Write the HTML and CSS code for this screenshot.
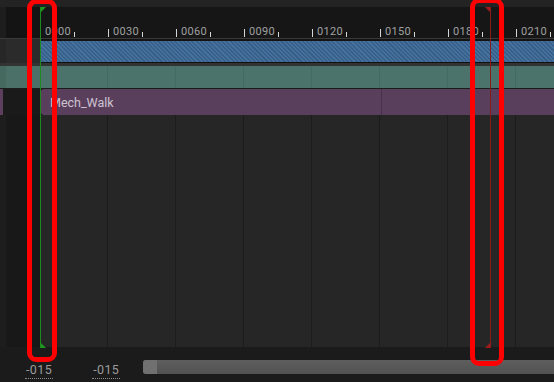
FILE: index.html
```html
<!DOCTYPE html>
<html lang="en">
<head>
  <meta charset="UTF-8" />
  <title>Sequencer Timeline</title>
  <link rel="stylesheet" href="styles.css">
</head>
<body>
  <div class="editor">
    <div class="topbar"></div>

    <div class="ruler">
      <div class="gutter"></div>
      <div class="scale">
        <div class="seg"><div class="half"><span class="tick major"></span><span class="num">0000</span></div><div class="half"><span class="tick minor"></span></div></div>
        <div class="seg"><div class="half"><span class="tick major"></span><span class="num">0030</span></div><div class="half"><span class="tick minor"></span></div></div>
        <div class="seg"><div class="half"><span class="tick major"></span><span class="num">0060</span></div><div class="half"><span class="tick minor"></span></div></div>
        <div class="seg"><div class="half"><span class="tick major"></span><span class="num">0090</span></div><div class="half"><span class="tick minor"></span></div></div>
        <div class="seg"><div class="half"><span class="tick major"></span><span class="num">0120</span></div><div class="half"><span class="tick minor"></span></div></div>
        <div class="seg"><div class="half"><span class="tick major"></span><span class="num">0150</span></div><div class="half"><span class="tick minor"></span></div></div>
        <div class="seg"><div class="half"><span class="tick major"></span><span class="num">0180</span></div><div class="half"><span class="tick minor"></span></div></div>
        <div class="seg"><div class="half"><span class="tick major"></span><span class="num">0210</span></div><div class="half"><span class="tick minor"></span></div></div>
      </div>
    </div>

    <!-- pistas -->
    <div class="track track-blue">
      <div class="gutter"></div>
      <div class="lane"></div>
    </div>
    <div class="track-gap"></div>
    <div class="track track-teal">
      <div class="gutter"></div>
      <div class="lane"></div>
    </div>
    <div class="track-sep"></div>
    <div class="track track-purple">
      <div class="gutter"><span class="edge"></span></div>
      <div class="lane">
        <div class="clip">
          <span class="clip-name">Mech_Walk</span>
          <span class="clip-cut"></span>
        </div>
      </div>
    </div>

    <div class="empty">
      <div class="gutter"></div>
      <div class="lane"></div>
    </div>

    <div class="bottom">
      <span class="field first">-015</span>
      <span class="field">-015</span>
      <div class="scrollbar"><span class="thumb"></span></div>
    </div>
  </div>

  <!-- rango de reproducción -->
  <div class="range range-start">
    <svg class="flag flag-top" width="5" height="5" viewBox="0 0 5 5"><polygon points="0,0 5,0 0,5" /></svg>
    <svg class="flag flag-bottom" width="5" height="5" viewBox="0 0 5 5"><polygon points="0,0 5,5 0,5" /></svg>
  </div>
  <div class="range range-end">
    <svg class="flag flag-top" width="5" height="5" viewBox="0 0 5 5"><polygon points="0,0 5,0 5,5" /></svg>
    <svg class="flag flag-bottom" width="5" height="5" viewBox="0 0 5 5"><polygon points="5,0 5,5 0,5" /></svg>
  </div>

  <!-- marcas de anotación -->
  <div class="mark mark-start"></div>
  <div class="mark mark-end"></div>
</body>
</html>
```

FILE: styles.css
```css
* {
  box-sizing: border-box;
}

body {
  margin: 0;
  width: 554px;
  height: 382px;
  overflow: hidden;
  position: relative;
  background-color: #151515;
  font-family: 'Roboto', 'Noto Sans', sans-serif;
}

.editor {
  display: flex;
  flex-direction: column;
  height: 382px;
}

.topbar {
  height: 7px;
  flex-shrink: 0;
  background-color: #232323;
}

.gutter {
  width: 40px;
  flex-shrink: 0;
  border-left: 6px solid #1d1d1d;
}

/* Regla de tiempo */
.ruler {
  display: flex;
  height: 32px;
  flex-shrink: 0;
  background-color: #161616;
  border-bottom: 1px solid #3a3a3a;
}

.ruler .gutter {
  background-color: #141414;
}

.scale {
  display: flex;
  flex: 1;
  overflow: hidden;
}

.seg {
  display: grid;
  grid-template-columns: 34px 34px;
  flex-shrink: 0;
  width: 68px;
}

.half {
  display: flex;
  align-items: flex-end;
  padding-bottom: 1px;
}

.tick {
  width: 1px;
  background-color: #d6d6d6;
}

.tick.major { height: 8px; }
.tick.minor { height: 5px; }

.num {
  margin-left: 4px;
  font-size: 11px;
  line-height: 11px;
  color: #a0a0a0;
  letter-spacing: 0.3px;
}

/* Pistas */
.track {
  display: flex;
  flex-shrink: 0;
}

.lane {
  flex: 1;
  position: relative;
}

.track-blue {
  height: 24px;
}

.track-blue .gutter {
  background-color: #2b2b2b;
  border-left-color: #272727;
}

.track-blue .lane {
  border-top: 2px solid #141414;
  border-bottom: 1px solid #111;
  background: repeating-linear-gradient(45deg, #45719e 0 1.5px, #375f88 1.5px 3px);
}

.track-gap {
  height: 3px;
  flex-shrink: 0;
  background-color: #333;
}

.track-teal {
  height: 22px;
  background-color: #4b736b;
}

.track-teal .gutter {
  border-left-color: #46695f;
  background-color: #4a7068;
}

.track-teal .lane {
  background: repeating-linear-gradient(to right, transparent 0 67px, rgba(0,0,0,0.08) 67px 68px);
}

.track-sep {
  height: 1px;
  flex-shrink: 0;
  background-color: #1c1c1c;
}

.track-purple {
  height: 26px;
}

.track-purple .gutter {
  border-left: 3px solid #5b3f5d;
  background-color: #1a1a1a;
}

.clip {
  height: 100%;
  margin-left: 1px;
  background-color: #5a3f5d;
  border-radius: 3px 0 0 3px;
  display: flex;
  align-items: center;
  position: relative;
}

.clip-name {
  margin-left: 9px;
  font-size: 12.5px;
  color: #cdc3cf;
}

.clip-cut {
  position: absolute;
  left: 340px;
  top: 0;
  width: 1px;
  height: 100%;
  background-color: #48314b;
}

/* Zona vacía */
.empty {
  display: flex;
  flex: 1;
}

.empty .gutter {
  background-color: #181818;
}

.empty .lane {
  background-color: #262626;
  background-image: repeating-linear-gradient(to right, transparent 0 67px, #1c1c1c 67px 68px);
}

/* Barra inferior */
.bottom {
  height: 35px;
  flex-shrink: 0;
  display: flex;
  align-items: center;
  background-color: #1b1b1b;
}

.field {
  font-size: 12.5px;
  color: #9a9a9a;
  letter-spacing: 0.4px;
  border-bottom: 1px dotted #8a8a8a;
  padding: 0 1px 1px;
  margin-top: 11px;
}

.field.first {
  margin-left: 25px;
}

.field + .field {
  margin-left: 39px;
}

.scrollbar {
  flex: 1;
  height: 14px;
  margin-left: 23px;
  margin-top: 4px;
  background: linear-gradient(#5e5e5e, #525252);
  border-radius: 3px 0 0 3px;
  display: flex;
}

.thumb {
  width: 14px;
  background-color: #707070;
  border-radius: 3px 0 0 3px;
}

/* Rango de reproducción */
.range {
  position: absolute;
  top: 7px;
  width: 1px;
  height: 341px;
}

.range-start {
  left: 40px;
  background-color: #1d8a1d;
  fill: #1d9a1d;
}

.range-end {
  left: 490px;
  background-color: #8a1a1a;
  fill: #a01c1c;
}

.flag {
  position: absolute;
  display: block;
}

.flag-top { top: 0; }
.flag-bottom { bottom: 0; }

.range-start .flag { left: 1px; }
.range-end .flag { right: 1px; }

/* Marcas rojas */
.mark {
  position: absolute;
  border: 5px solid #ff0000;
  border-radius: 9px;
}

.mark-start {
  left: 27px;
  top: -1px;
  width: 30px;
  height: 363px;
}

.mark-end {
  left: 470px;
  top: -2px;
  width: 34px;
  height: 368px;
}
```
